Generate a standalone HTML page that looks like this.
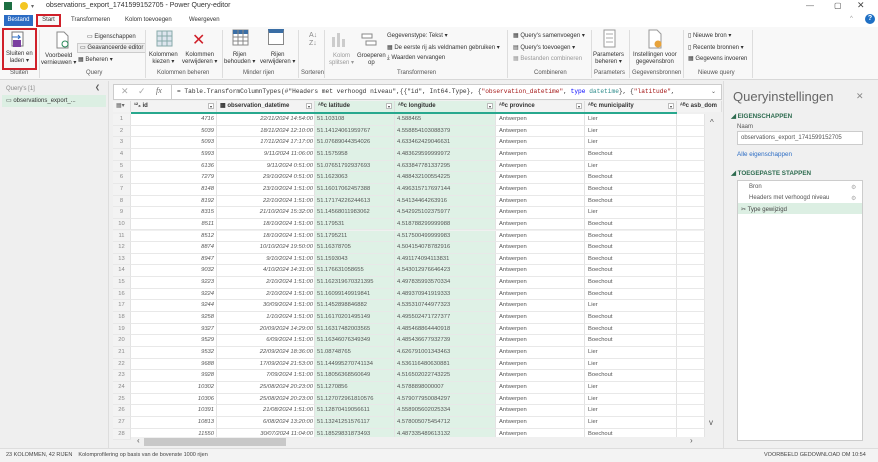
<!DOCTYPE html>
<html><head><meta charset="utf-8"><style>
*{box-sizing:border-box;margin:0;padding:0}
body{width:878px;height:462px;overflow:hidden;font-family:"Liberation Sans",sans-serif;background:#f0f0f0;position:relative;color:#333}
.a{position:absolute;white-space:nowrap}
.s{font-size:6px}
.rib{font-size:6px;color:#333;text-align:center;line-height:7px}
.gl{font-size:6px;color:#555;top:70px}
.sep{position:absolute;top:30px;height:48px;width:1px;background:#ddd}
.row{position:absolute;left:113px;height:11.65px;width:592px;font-size:5.8px;line-height:11.65px;color:#555}
.row div{position:absolute;top:0;height:100%;overflow:hidden;border-right:1px solid #e3e3e3;border-bottom:1px solid #e8e8e8}
.c0{left:0;width:18px;text-align:center;background:#f3f3f3;color:#888}
.c1{left:18px;width:86px;text-align:right;padding-right:2px;font-style:italic;background:#fff}
.c2{left:104px;width:98px;text-align:right;padding-right:1px;font-style:italic;background:#fff}
.c3{left:202px;width:80px;padding-left:2px;background:#dff1e6}
.c4{left:282px;width:101px;padding-left:2px;background:#dff1e6}
.c5{left:383px;width:89px;padding-left:3px;background:#fff}
.c6{left:472px;width:92px;padding-left:3px;background:#fff}
.c7{left:564px;width:28px;background:#fff}
.hd{position:absolute;top:101px;height:11px;font-size:6px;font-weight:bold;line-height:11px;color:#333;background:#f3f3f3;border-right:1px solid #ddd;padding-left:3px}
.hd.g{background:#dff1e6}
.dd{position:absolute;right:2px;top:2px;width:6px;height:6px;border:1px solid #bbb;background:#fff;font-size:4px;line-height:5px;text-align:center;font-weight:normal}
</style></head><body>
<!-- title bar -->
<div class="a" style="left:0;top:0;width:878px;height:13px;background:#fff"></div>
<div class="a" style="left:4px;top:2px;width:8px;height:8px;background:#1d6f42"></div>
<div class="a" style="left:20px;top:2px;width:8px;height:8px;border-radius:50%;background:#f3c623"></div>
<div class="a s" style="left:31px;top:3px;color:#666">▾</div>
<div class="a" style="left:46px;top:2px;font-size:7px;color:#333">observations_export_1741599152705 - Power Query-editor</div>
<div class="a" style="left:806px;top:1px;font-size:8px;color:#666">—</div>
<div class="a" style="left:834px;top:1px;font-size:8px;color:#444">▢</div>
<div class="a" style="left:857px;top:0px;font-size:9px;color:#444">✕</div>
<!-- tabs -->
<div class="a" style="left:0;top:13px;width:878px;height:14px;background:#fff"></div>
<div class="a" style="left:4px;top:15px;width:29px;height:11px;background:#2b6cc4;color:#fff;font-size:6px;line-height:11px;text-align:center">Bestand</div>
<div class="a" style="left:36px;top:14px;width:25px;height:13px;border:2px solid #d0202a;font-size:6px;line-height:9px;text-align:center;background:#f8f8f8">Start</div>
<div class="a s" style="left:71px;top:17px">Transformeren</div>
<div class="a s" style="left:125px;top:17px">Kolom toevoegen</div>
<div class="a s" style="left:189px;top:17px">Weergeven</div>
<div class="a" style="left:850px;top:16px;font-size:6px;color:#999">^</div>
<div class="a" style="left:865px;top:14px;width:10px;height:10px;border-radius:50%;background:#1e6fc4;color:#fff;font-size:7px;text-align:center;line-height:10px;font-weight:bold">?</div>
<!-- ribbon -->
<div class="a" style="left:0;top:27px;width:878px;height:53px;background:#f8f8f8;border-bottom:1px solid #d8d8d8"></div>
<div class="a" style="left:2px;top:28px;width:35px;height:42px;border:2px solid #d0202a"></div>
<svg class="a" style="left:10px;top:31px" width="16" height="18"><rect x="2" y="1" width="11" height="14" fill="#fff" stroke="#777"/><path d="M2 6h8l-2-2M10 6l-2 2" stroke="#2b6cc4" fill="none"/><rect x="3" y="9" width="8" height="7" fill="#7a3fa0"/></svg>
<div class="a rib" style="left:6px;top:51px">Sluiten en<br>laden ▾</div>
<div class="a gl" style="left:10px">Sluiten</div>
<div class="sep" style="left:39px"></div>
<svg class="a" style="left:54px;top:31px" width="16" height="18"><path d="M3 1h7l4 4v12H3z" fill="#fff" stroke="#888"/><circle cx="11" cy="13" r="3" fill="none" stroke="#2b8a5a"/></svg>
<div class="a rib" style="left:41px;top:53px">Voorbeeld<br>vernieuwen ▾</div>
<div class="a s" style="left:87px;top:33px">▭ Eigenschappen</div>
<div class="a s" style="left:77px;top:43px;border:1px solid #ccc;background:#eee;padding:0 2px;height:10px;line-height:9px">▭ Geavanceerde editor</div>
<div class="a s" style="left:78px;top:56px">▦ Beheren ▾</div>
<div class="a gl" style="left:86px">Query</div>
<div class="sep" style="left:145px"></div>
<svg class="a" style="left:156px;top:30px" width="18" height="18"><rect x="1" y="1" width="15" height="15" fill="#dde5ee" stroke="#8aa"/><path d="M6 1v15M11 1v15M1 6h15M1 11h15" stroke="#8aa"/></svg>
<div class="a rib" style="left:149px;top:52px">Kolommen<br>kiezen ▾</div>
<div class="a" style="left:192px;top:30px;font-size:16px;color:#d0202a">✕</div>
<div class="a rib" style="left:182px;top:52px">Kolommen<br>verwijderen ▾</div>
<div class="a gl" style="left:157px">Kolommen beheren</div>
<div class="sep" style="left:222px"></div>
<svg class="a" style="left:232px;top:29px" width="18" height="18"><rect x="1" y="1" width="15" height="15" fill="#fff" stroke="#888"/><rect x="1" y="1" width="15" height="4" fill="#3a6ea5"/><path d="M6 1v15M11 1v15M1 8h15M1 12h15" stroke="#888"/></svg>
<div class="a rib" style="left:224px;top:52px">Rijen<br>behouden ▾</div>
<div class="a" style="left:268px;top:29px;width:16px;height:16px;border:1px solid #888;background:#fff;border-top:4px solid #3a6ea5"></div>
<div class="a rib" style="left:260px;top:52px">Rijen<br>verwijderen ▾</div>
<div class="a gl" style="left:243px">Minder rijen</div>
<div class="sep" style="left:298px"></div>
<div class="a" style="left:309px;top:32px;font-size:7px;color:#888;line-height:8px">A↓<br>Z↓</div>
<div class="a gl" style="left:301px">Sorteren</div>
<div class="sep" style="left:324px"></div>
<svg class="a" style="left:331px;top:31px" width="16" height="18"><rect x="1" y="6" width="3" height="10" fill="#ccc"/><rect x="6" y="2" width="3" height="14" fill="#ccc"/><rect x="11" y="8" width="3" height="8" fill="#ccc"/></svg>
<div class="a rib" style="left:329px;top:53px;color:#999">Kolom<br>splitsen ▾</div>
<svg class="a" style="left:361px;top:33px" width="16" height="14"><rect x="1" y="1" width="10" height="4" fill="#fff" stroke="#888"/><rect x="5" y="8" width="10" height="4" fill="#fff" stroke="#888"/></svg>
<div class="a rib" style="left:357px;top:53px">Groeperen<br>op</div>
<div class="a s" style="left:387px;top:32px">Gegevenstype: Tekst ▾</div>
<div class="a s" style="left:387px;top:44px">▦ De eerste rij als veldnamen gebruiken ▾</div>
<div class="a s" style="left:387px;top:55px">⤓ Waarden vervangen</div>
<div class="a gl" style="left:397px">Transformeren</div>
<div class="sep" style="left:507px"></div>
<div class="a s" style="left:513px;top:32px">▦ Query's samenvoegen ▾</div>
<div class="a s" style="left:513px;top:44px">▤ Query's toevoegen ▾</div>
<div class="a s" style="left:513px;top:55px;color:#999">▦ Bestanden combineren</div>
<div class="a gl" style="left:534px">Combineren</div>
<div class="sep" style="left:591px"></div>
<svg class="a" style="left:603px;top:29px" width="14" height="20"><rect x="1" y="1" width="11" height="17" fill="#fff" stroke="#999"/><path d="M3 5h7M3 9h7M3 13h7" stroke="#aaa"/></svg>
<div class="a rib" style="left:593px;top:52px">Parameters<br>beheren ▾</div>
<div class="a gl" style="left:594px">Parameters</div>
<div class="sep" style="left:629px"></div>
<svg class="a" style="left:647px;top:29px" width="16" height="20"><path d="M2 1h8l4 4v14H2z" fill="#fff" stroke="#999"/><circle cx="11" cy="15" r="3.5" fill="#e8a33b"/></svg>
<div class="a rib" style="left:633px;top:52px">Instellingen voor<br>gegevensbron</div>
<div class="a gl" style="left:632px">Gegevensbronnen</div>
<div class="sep" style="left:683px"></div>
<div class="a s" style="left:688px;top:32px">▯ Nieuwe bron ▾</div>
<div class="a s" style="left:688px;top:44px">▯ Recente bronnen ▾</div>
<div class="a s" style="left:688px;top:55px">▦ Gegevens invoeren</div>
<div class="a gl" style="left:698px">Nieuwe query</div>
<div class="sep" style="left:752px"></div>
<!-- left pane -->
<div class="a" style="left:0;top:81px;width:109px;height:367px;background:#efefef;border-right:1px solid #ddd"></div>
<div class="a s" style="left:6px;top:86px;color:#888">Query's [1]</div>
<div class="a s" style="left:95px;top:84px;color:#555">❮</div>
<div class="a" style="left:2px;top:95px;width:104px;height:12px;background:#dcefe3"></div>
<div class="a s" style="left:6px;top:97px;color:#333">▭ observations_export_...</div>
<!-- formula bar -->
<div class="a" style="left:113px;top:84px;width:609px;height:16px;background:#fff;border:1px solid #ccc"></div>
<div class="a" style="left:121px;top:86px;font-size:9px;color:#aaa">✕</div>
<div class="a" style="left:138px;top:86px;font-size:9px;color:#aaa">✓</div>
<div class="a" style="left:156px;top:86px;font-size:8px;font-style:italic;color:#666;font-family:'Liberation Serif',serif">fx</div>
<div class="a" style="left:171px;top:84px;width:1px;height:16px;background:#ccc"></div>
<div class="a" style="left:177px;top:88px;font-family:'Liberation Mono',monospace;font-size:6.2px;color:#333">= Table.TransformColumnTypes(#"Headers met verhoogd niveau",{{"id", Int64.Type}, {<span style="color:#a31515">"observation_datetime"</span>, <span style="color:#0000ff">type</span> <span style="color:#2b8a8a">datetime</span>}, {<span style="color:#a31515">"latitude"</span>,</div>
<div class="a s" style="left:711px;top:88px;color:#555">⌄</div>
<!-- headers -->
<div class="hd" style="left:113px;width:18px;font-weight:normal;color:#666">▦▾</div>
<div class="hd" style="left:131px;width:86px">¹²₃ id<span class="dd">▾</span></div>
<div class="hd" style="left:217px;width:98px">▦ observation_datetime<span class="dd">▾</span></div>
<div class="hd g" style="left:315px;width:80px">ᴬᴮc latitude<span class="dd">▾</span></div>
<div class="hd g" style="left:395px;width:101px">ᴬᴮc longitude<span class="dd">▾</span></div>
<div class="hd" style="left:496px;width:89px">ᴬᴮc province<span class="dd">▾</span></div>
<div class="hd" style="left:585px;width:92px">ᴬᴮc municipality<span class="dd">▾</span></div>
<div class="hd" style="left:677px;width:45px;overflow:hidden">ᴬᴮc asb_dom</div>
<div class="a" style="left:131px;top:112px;width:546px;height:2px;background:#28a88e"></div>
<div id="rows"></div>
<!-- vertical scrollbar -->
<div class="a" style="left:705px;top:114px;width:17px;height:334px;background:#f0f0f0"></div>
<div class="a" style="left:710px;top:118px;font-size:8px;color:#555">^</div>
<div class="a" style="left:709px;top:418px;font-size:8px;color:#555">v</div>
<!-- h scrollbar -->
<div class="a" style="left:131px;top:437px;width:574px;height:10px;background:#f0f0f0"></div>
<div class="a" style="left:137px;top:436px;font-size:8px;color:#555">‹</div>
<div class="a" style="left:144px;top:438px;width:142px;height:8px;background:#c8c8c8"></div>
<div class="a" style="left:690px;top:436px;font-size:8px;color:#555">›</div>
<!-- right pane -->
<div class="a" style="left:723px;top:81px;width:155px;height:367px;background:#f0f0f0;border-left:1px solid #ddd"></div>
<div class="a" style="left:733px;top:89px;font-size:13px;color:#666">Queryinstellingen</div>
<div class="a" style="left:856px;top:91px;font-size:9px;color:#888">✕</div>
<div class="a" style="left:731px;top:113px;font-size:6.3px;font-weight:bold;color:#2d6b4f">◢ EIGENSCHAPPEN</div>
<div class="a s" style="left:737px;top:124px;color:#555">Naam</div>
<div class="a" style="left:737px;top:131px;width:126px;height:14px;background:#fff;border:1px solid #ccc;font-size:6px;line-height:12px;padding-left:3px;color:#555">observations_export_1741599152705</div>
<div class="a" style="left:737px;top:151px;font-size:6.3px;color:#2b6cc4">Alle eigenschappen</div>
<div class="a" style="left:731px;top:170px;font-size:6.3px;font-weight:bold;color:#2d6b4f">◢ TOEGEPASTE STAPPEN</div>
<div class="a" style="left:737px;top:180px;width:126px;height:261px;background:#fff;border:1px solid #ccc"></div>
<div class="a s" style="left:749px;top:184px;color:#555">Bron</div>
<div class="a s" style="left:851px;top:184px;color:#aaa">⚙</div>
<div class="a s" style="left:749px;top:195px;color:#555">Headers met verhoogd niveau</div>
<div class="a s" style="left:851px;top:195px;color:#aaa">⚙</div>
<div class="a" style="left:738px;top:203px;width:124px;height:11px;background:#dcefe3"></div>
<div class="a s" style="left:741px;top:206px;color:#444">✂ Type gewijzigd</div>
<!-- status bar -->
<div class="a" style="left:0;top:448px;width:878px;height:14px;background:#f3f3f3;border-top:1px solid #ddd"></div>
<div class="a" style="left:6px;top:452px;font-size:5.5px;color:#444">23 KOLOMMEN, 42 RIJEN &nbsp;&nbsp; Kolomprofilering op basis van de bovenste 1000 rijen</div>
<div class="a" style="left:764px;top:452px;font-size:5.5px;color:#444">VOORBEELD GEDOWNLOAD OM 10:54</div>
<script>
var d=[
[4716,"22/11/2024 14:54:00","51.103108","4.588465","Lier"],
[5039,"18/11/2024 12:10:00","51.14124061959767","4.558854103088379","Lier"],
[5093,"17/11/2024 17:17:00","51.07689044354026","4.633462429046631","Lier"],
[5993,"9/11/2024 11:06:00","51.1575958","4.483629599999972","Boechout"],
[6136,"9/11/2024 0:51:00","51.07651792937693","4.633847781337295","Lier"],
[7279,"29/10/2024 0:51:00","51.1623063","4.488432100554225","Boechout"],
[8148,"23/10/2024 1:51:00","51.16017062457388","4.496315717697144","Boechout"],
[8192,"22/10/2024 1:51:00","51.17174226244613","4.54134464263916","Boechout"],
[8315,"21/10/2024 15:32:00","51.14568011983062","4.542925102375977","Lier"],
[8511,"18/10/2024 1:51:00","51.179531","4.518788299999988","Boechout"],
[8512,"18/10/2024 1:51:00","51.1795211","4.517500499999983","Boechout"],
[8874,"10/10/2024 19:50:00","51.16378705","4.504154078782916","Boechout"],
[8947,"9/10/2024 1:51:00","51.1593043","4.491174094113831","Boechout"],
[9032,"4/10/2024 14:31:00","51.176631058655","4.543012976646423","Boechout"],
[9223,"2/10/2024 1:51:00","51.162319670321395","4.497835993570334","Boechout"],
[9224,"2/10/2024 1:51:00","51.16099149919841","4.489370941919333","Boechout"],
[9244,"30/09/2024 1:51:00","51.1452898846882","4.535310744977323","Lier"],
[9258,"1/10/2024 1:51:00","51.16170201495149","4.495502471727377","Boechout"],
[9327,"20/09/2024 14:29:00","51.16317482003565","4.485468864440918","Boechout"],
[9529,"6/09/2024 1:51:00","51.16346076349349","4.485436677932739","Boechout"],
[9532,"22/09/2024 18:36:00","51.08748765","4.626791001343463","Lier"],
[9688,"17/09/2024 21:53:00","51.144995270741134","4.536116480630881","Lier"],
[9928,"7/09/2024 1:51:00","51.18056368560649","4.516502022743225","Boechout"],
[10302,"25/08/2024 20:23:00","51.1270856","4.5788898000007","Lier"],
[10306,"25/08/2024 20:23:00","51.127072961810576","4.579077950084297","Lier"],
[10391,"21/08/2024 1:51:00","51.12870419056611","4.558905602025334","Lier"],
[10813,"6/08/2024 13:20:00","51.13241251576117","4.578005075454712","Lier"],
[11550,"30/07/2024 11:04:00","51.18529831873493","4.487335489613132","Boechout"]];
var h="";d.forEach(function(r,i){h+='<div class="row" style="top:'+(114+i*11.65)+'px"><div class="c0">'+(i+1)+'</div><div class="c1">'+r[0]+'</div><div class="c2">'+r[1]+'</div><div class="c3">'+r[2]+'</div><div class="c4">'+r[3]+'</div><div class="c5">Antwerpen</div><div class="c6">'+r[4]+'</div><div class="c7"></div></div>';});
document.getElementById("rows").outerHTML=h;
</script>
</body></html>
